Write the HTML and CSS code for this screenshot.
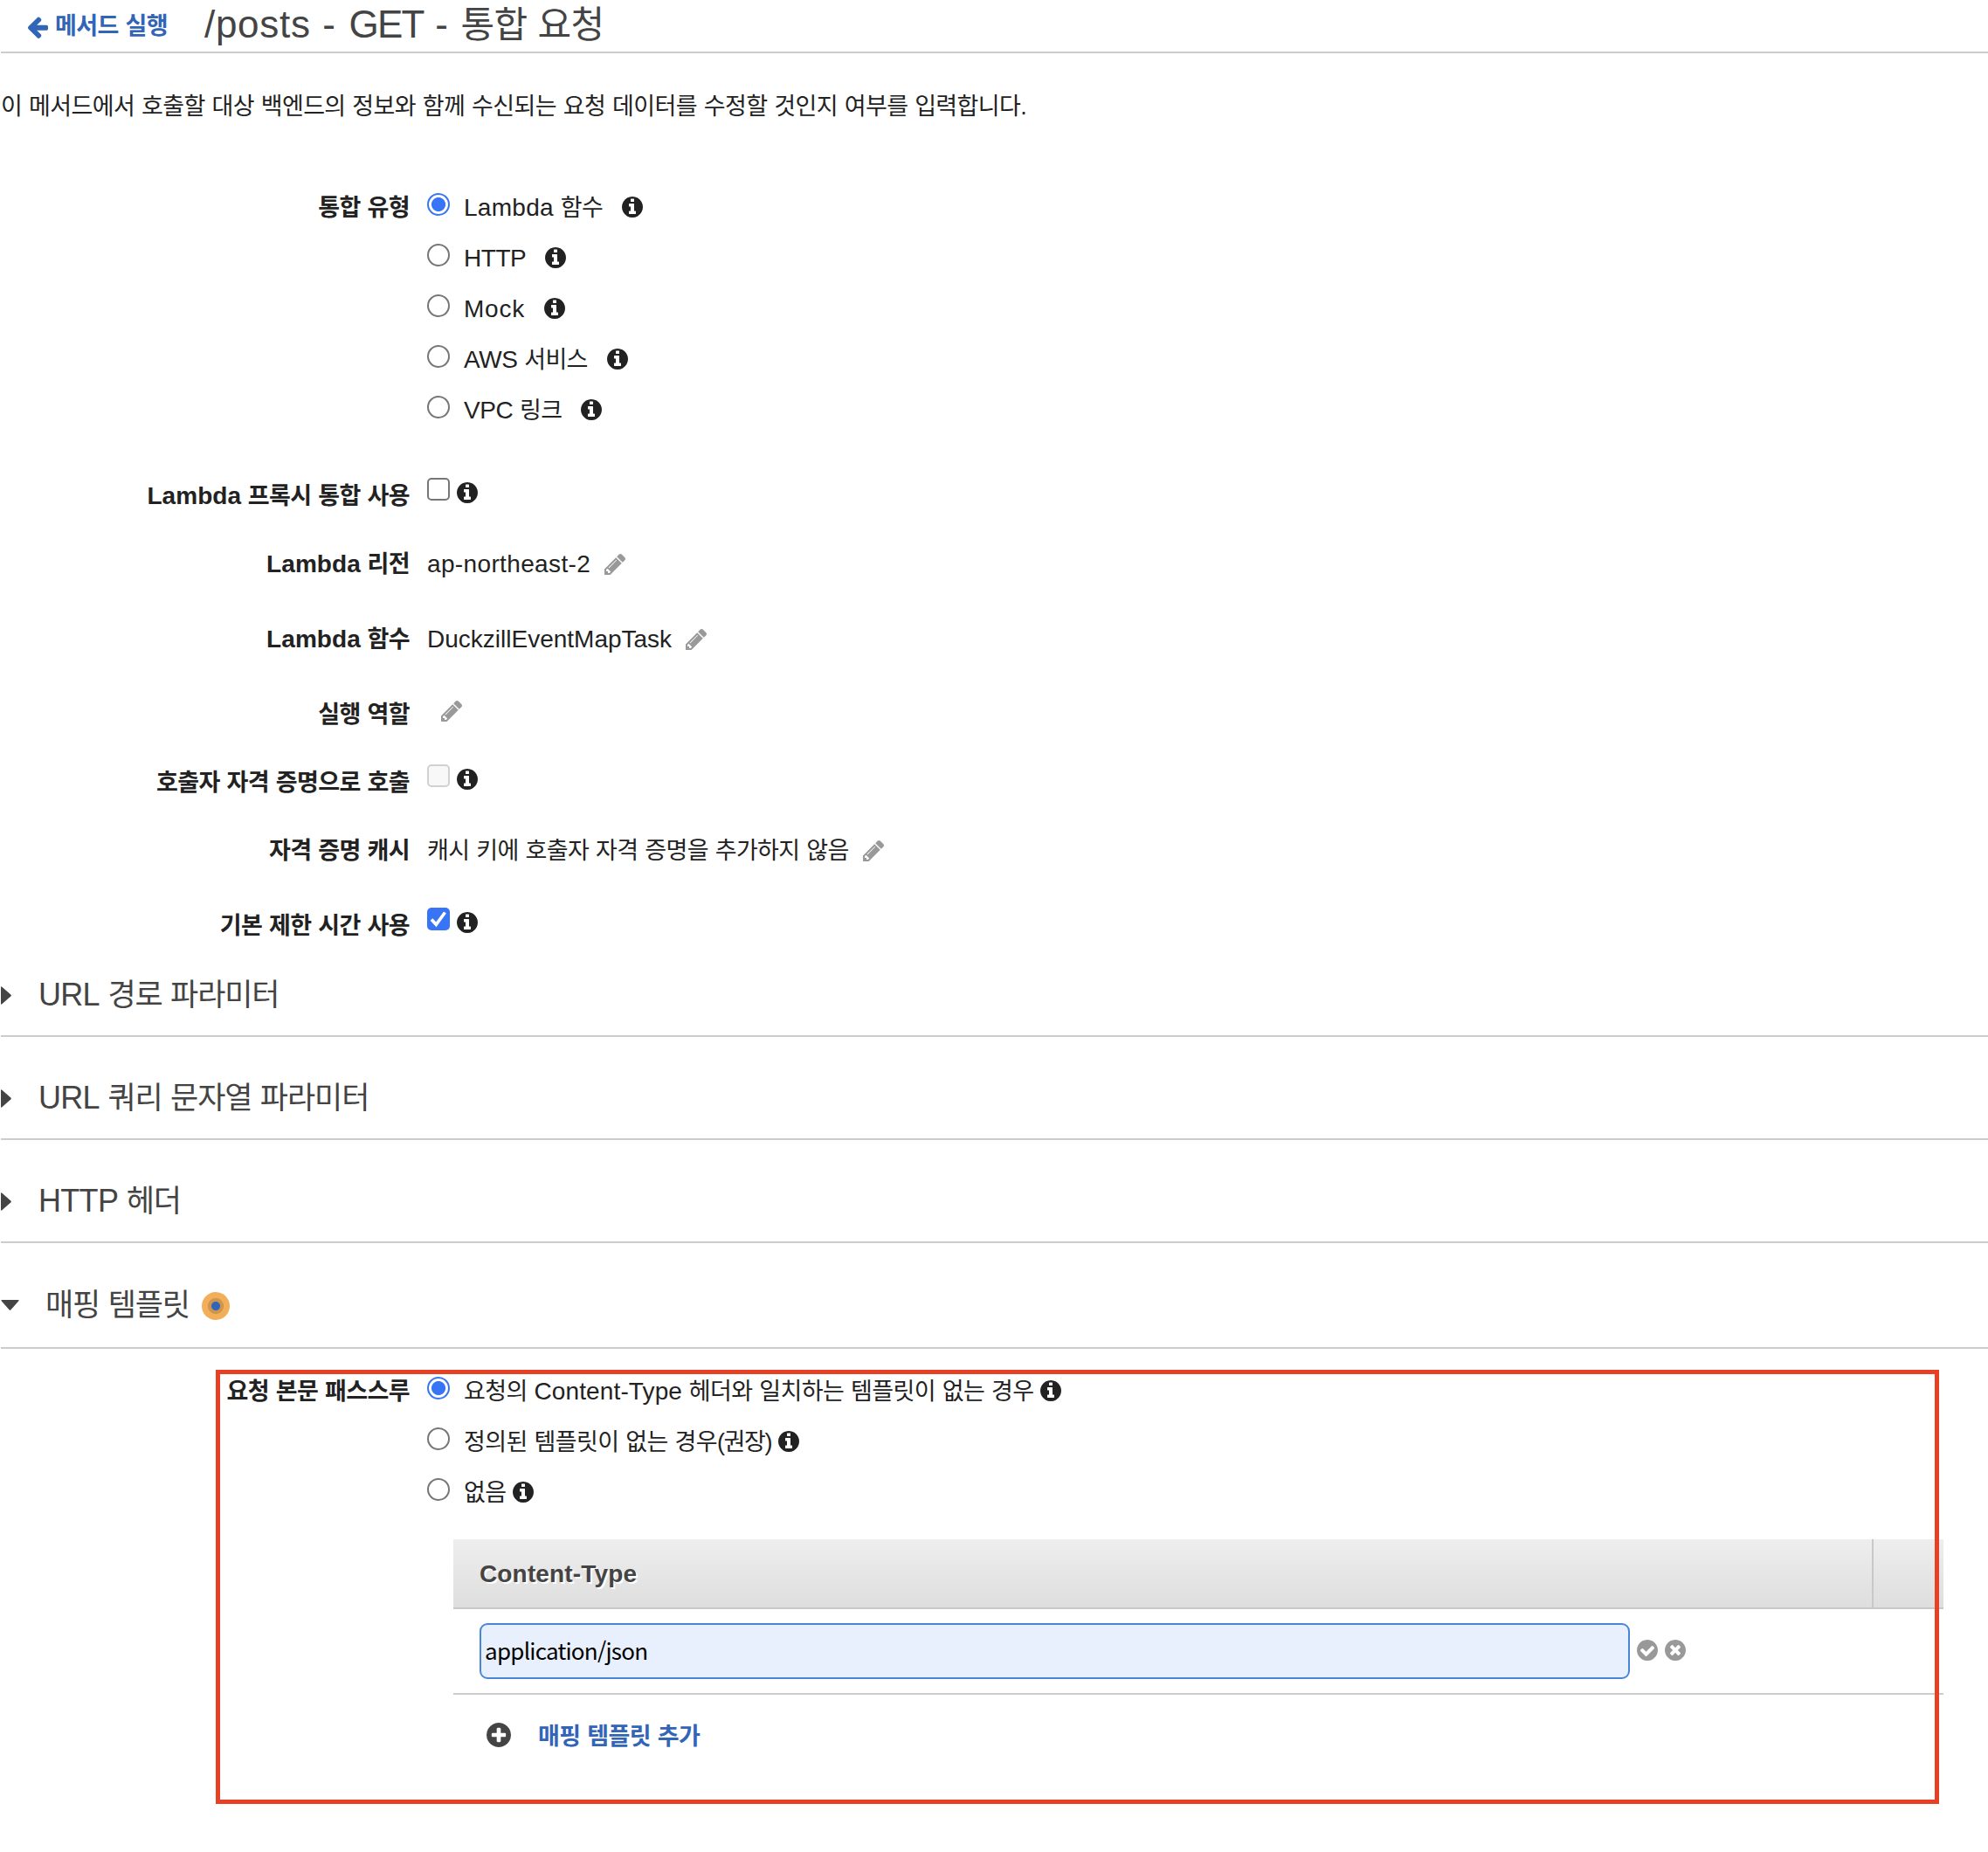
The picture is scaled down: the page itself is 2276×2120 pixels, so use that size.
FILE: index.html
```html
<!DOCTYPE html>
<html lang="ko">
<head>
<meta charset="utf-8">
<title>/posts - GET - 통합 요청</title>
<link rel="stylesheet" href="styles.css">
</head>
<body>
<svg class="sprite" width="0" height="0">
  <symbol id="info" viewBox="0 128 1536 1536"><path d="M1024 1376v-160q0-14-9-23t-23-9h-96v-512q0-14-9-23t-23-9h-320q-14 0-23 9t-9 23v160q0 14 9 23t23 9h96v320h-96q-14 0-23 9t-9 23v160q0 14 9 23t23 9h448q14 0 23-9t9-23zm-128-896v-160q0-14-9-23t-23-9h-192q-14 0-23 9t-9 23v160q0 14 9 23t23 9h192q14 0 23-9t9-23zm640 416q0 209-103 385.500t-279.500 279.500-385.500 103-385.500-103-279.500-279.500-103-385.500 103-385.500 279.500-279.500 385.500-103 385.500 103 279.500 279.500 103 385.500z"/></symbol>
  <symbol id="pencil" viewBox="128 149 1515 1515"><path d="M491 1536l91-91-235-235-91 91v107h128v128h107zm523-928q0-22-22-22-10 0-17 7l-542 542q-7 7-7 17 0 22 22 22 10 0 17-7l542-542q7-7 7-17zm-54-192l416 416-832 832h-416v-416zm683 96q0 53-37 90l-166 166-416-416 166-165q36-38 90-38 53 0 91 38l235 234q37 39 37 91z"/></symbol>
  <symbol id="check" viewBox="128 128 1536 1536"><path d="M1412 734q0-28-18-46l-91-90q-19-19-45-19t-45 19l-408 407-226-226q-19-19-45-19t-45 19l-91 90q-18 18-18 46 0 27 18 45l362 362q19 19 45 19 27 0 46-19l543-543q18-18 18-45zm252 162q0 209-103 385.500t-279.500 279.500-385.500 103-385.500-103-279.500-279.500-103-385.500 103-385.500 279.500-279.500 385.500-103 385.500 103 279.500 279.500 103 385.500z"/></symbol>
  <symbol id="times" viewBox="128 128 1536 1536"><path d="M1277 1122q0-26-19-45l-181-181 181-181q19-19 19-45 0-27-19-46l-90-90q-19-19-46-19-26 0-45 19l-181 181-181-181q-19-19-45-19-27 0-46 19l-90 90q-19 19-19 46 0 26 19 45l181 181-181 181q-19 19-19 45 0 27 19 46l90 90q19 19 46 19 26 0 45-19l181-181 181 181q19 19 45 19 27 0 46-19l90-90q19-19 19-46zm387-226q0 209-103 385.500t-279.500 279.500-385.500 103-385.500-103-279.500-279.500-103-385.500 103-385.500 279.500-279.500 385.500-103 385.500 103 279.500 279.500 103 385.500z"/></symbol>
  <symbol id="plus" viewBox="128 128 1536 1536"><path d="M1344 960v-128q0-26-19-45t-45-19h-256v-256q0-26-19-45t-45-19h-128q-26 0-45 19t-19 45v256h-256q-26 0-45 19t-19 45v128q0 26 19 45t45 19h256v256q0 26 19 45t45 19h128q26 0 45-19t19-45v-256h256q26 0 45-19t19-45zm320-64q0 209-103 385.500t-279.500 279.500-385.500 103-385.500-103-279.500-279.500-103-385.500 103-385.500 279.500-279.500 385.500-103 385.500 103 279.500 279.500 103 385.500z"/></symbol>
  <symbol id="back" viewBox="192 146 1472 1600"><path d="M1664 896v128q0 53-32.500 90.500t-84.500 37.500h-704l293 294q38 36 38 90t-38 90l-75 76q-37 37-90 37-52 0-91-37l-651-652q-37-37-37-90 0-52 37-91l651-650q38-38 91-38 52 0 90 38l75 74q38 38 38 91t-38 91l-293 293h704q52 0 84.500 37.500t32.500 90.500z"/></symbol>
</svg>

<header class="page-head">
  <a class="back"><svg class="back-icon"><use href="#back"/></svg>메서드 실행</a>
  <h1><span class="en">/posts - <span class="verb">GET</span> - </span>통합 요청</h1>
</header>
<p class="intro">이 메서드에서 호출할 대상 백엔드의 정보와 함께 수신되는 요청 데이터를 수정할 것인지 여부를 입력합니다.</p>

<form class="form">
  <div class="group">
    <div class="label tall">통합 유형</div>
    <div class="options wide">
      <label class="option"><input type="radio" name="type" checked><span><span class="en">Lambda</span> 함수</span><svg class="icon"><use href="#info"/></svg></label>
      <label class="option"><input type="radio" name="type"><span class="en caps">HTTP</span><svg class="icon"><use href="#info"/></svg></label>
      <label class="option"><input type="radio" name="type"><span class="en loose">Mock</span><svg class="icon"><use href="#info"/></svg></label>
      <label class="option"><input type="radio" name="type"><span><span class="en caps">AWS</span> 서비스</span><svg class="icon"><use href="#info"/></svg></label>
      <label class="option"><input type="radio" name="type"><span><span class="en caps">VPC</span> 링크</span><svg class="icon"><use href="#info"/></svg></label>
    </div>
  </div>
  <div class="row first">
    <div class="label"><span class="en">Lambda</span> 프록시 통합 사용</div>
    <div class="field toggle"><input type="checkbox"><svg class="icon"><use href="#info"/></svg></div>
  </div>
  <div class="row">
    <div class="label"><span class="en">Lambda</span> 리전</div>
    <div class="field"><span class="en region">ap-northeast-2</span><svg class="icon edit"><use href="#pencil"/></svg></div>
  </div>
  <div class="row spaced">
    <div class="label"><span class="en">Lambda</span> 함수</div>
    <div class="field"><span class="en function">DuckzillEventMapTask</span><svg class="icon edit"><use href="#pencil"/></svg></div>
  </div>
  <div class="row spaced">
    <div class="label">실행 역할</div>
    <div class="field toggle"><svg class="icon edit"><use href="#pencil"/></svg></div>
  </div>
  <div class="row">
    <div class="label">호출자 자격 증명으로 호출</div>
    <div class="field toggle"><input type="checkbox" disabled><svg class="icon"><use href="#info"/></svg></div>
  </div>
  <div class="row">
    <div class="label">자격 증명 캐시</div>
    <div class="field"><span>캐시 키에 호출자 자격 증명을 추가하지 않음</span><svg class="icon edit"><use href="#pencil"/></svg></div>
  </div>
  <div class="row spaced">
    <div class="label">기본 제한 시간 사용</div>
    <div class="field toggle"><input type="checkbox" checked><svg class="icon"><use href="#info"/></svg></div>
  </div>
</form>

<section class="section lead">
  <svg class="caret" viewBox="0 0 12 21"><path d="M0 1.500Q0 -.5 1.600 .9L11.300 9.500Q12.300 10.500 11.300 11.500L1.600 20.100Q0 21.500 0 19.500z"/></svg>
  <h2><span class="en">URL</span> 경로 파라미터</h2>
</section>
<section class="section">
  <svg class="caret" viewBox="0 0 12 21"><path d="M0 1.500Q0 -.5 1.600 .9L11.300 9.500Q12.300 10.500 11.300 11.500L1.600 20.100Q0 21.500 0 19.500z"/></svg>
  <h2><span class="en">URL</span> 쿼리 문자열 파라미터</h2>
</section>
<section class="section">
  <svg class="caret" viewBox="0 0 12 21"><path d="M0 1.500Q0 -.5 1.600 .9L11.300 9.500Q12.300 10.500 11.300 11.500L1.600 20.100Q0 21.500 0 19.500z"/></svg>
  <h2><span class="en">HTTP</span> 헤더</h2>
</section>
<section class="section open">
  <svg class="caret" viewBox="0 0 21 12"><path d="M1.500 0Q-.5 0 .9 1.600L9.500 11.300Q10.500 12.300 11.500 11.300L20.100 1.600Q21.500 0 19.500 0z"/></svg>
  <h2>매핑 템플릿</h2>
  <span class="beacon"></span>
</section>

<div class="mapping">
  <div class="group">
    <div class="label tall">요청 본문 패스스루</div>
    <div class="options">
      <label class="option"><input type="radio" name="pass" checked><span>요청의 <span class="en tight">Content-Type</span> 헤더와 일치하는 템플릿이 없는 경우</span><svg class="icon"><use href="#info"/></svg></label>
      <label class="option"><input type="radio" name="pass"><span>정의된 템플릿이 없는 경우<span class="paren">(권장)</span></span><svg class="icon"><use href="#info"/></svg></label>
      <label class="option"><input type="radio" name="pass"><span>없음</span><svg class="icon"><use href="#info"/></svg></label>
    </div>
  </div>
  <div class="table">
    <div class="thead"><div class="th en">Content-Type</div><div class="th-end"></div></div>
    <div class="tr">
      <input class="text" type="text" value="application/json">
      <svg class="icon"><use href="#check"/></svg>
      <svg class="icon"><use href="#times"/></svg>
    </div>
    <div class="add"><svg class="add-icon"><use href="#plus"/></svg><a>매핑 템플릿 추가</a></div>
  </div>
  <div class="highlight"></div>
</div>
</body>
</html>
```
FILE: styles.css
```css
* { box-sizing: border-box; }

body {
  margin: 0;
  padding-left: 1px;
  height: 2120px;
  overflow: hidden;
  background: #fff;
  color: #222;
  font-family: "Liberation Sans", "Noto Sans CJK KR", sans-serif;
  font-size: 27px;
  letter-spacing: -0.6px;
  word-spacing: 0.85px;
}

.sprite { position: absolute; }
.en { font-size: 28px; letter-spacing: 0.3px; }
.caps { letter-spacing: -0.45px; }
.loose { letter-spacing: 0.8px; }
.function { letter-spacing: 0; }
.region { letter-spacing: 0.36px; }
.tight { letter-spacing: 0.12px; }
.paren { letter-spacing: -1.4px; }

/* Page header */
.page-head {
  display: flex;
  height: 61px;
  border-bottom: 2px solid #ccc;
}
.back {
  display: flex;
  width: 202px;
  padding-left: 31px;
  color: #3264b8;
  font-weight: bold;
  line-height: 61px;
}
.back-icon { width: 23px; height: 25px; margin: 19px 8px 0 0; fill: currentColor; }
h1 {
  margin: 0;
  padding-left: 31px;
  color: #444;
  font-size: 42px;
  font-weight: normal;
  line-height: 56px;
  letter-spacing: -0.6px;
}
h1 .en { font-size: 44px; letter-spacing: 0.7px; }
h1 .verb { margin-left: 1px; letter-spacing: -1.8px; }
.intro { margin: 41px 0 0; line-height: 40px; }

/* Form */
.form { margin-top: 67px; }
.group, .row { display: flex; }
.row { height: 44px; margin-top: 34px; line-height: 44px; }
.row.spaced { margin-top: 42px; }
.row.first { margin-top: 47px; }
.label {
  width: 468px;
  margin-right: 20px;
  text-align: right;
  font-weight: bold;
  white-space: nowrap;
}
.label .en { letter-spacing: 0.05px; }
.label.tall { line-height: 58px; }
.field { display: flex; align-items: center; }
.icon { flex: none; width: 24px; height: 24px; fill: #222; }
.icon.edit { margin-left: 16px; fill: #999; }
.toggle .icon { margin: 0 0 9px 8px; }
.toggle .icon.edit { margin-left: 16px; }
.option {
  display: flex;
  align-items: center;
  height: 58px;
  line-height: 58px;
  white-space: nowrap;
}
.option .icon { margin: 0 0 2px 8px; }
.options.wide .icon { margin-left: 22px; }

input[type="radio"], input[type="checkbox"] {
  flex: none;
  appearance: none;
  width: 26px;
  height: 26px;
  margin: 0;
  border: 2px solid #767676;
  background: #fff;
}
input[type="radio"] { margin: 0 16px 8px 0; border-radius: 50%; }
input[type="radio"]:checked {
  border-color: #3875f6;
  background: radial-gradient(circle, #3875f6 7.600px, #fff 8.400px);
}
input[type="checkbox"] { margin-bottom: 16px; border-radius: 5px; }
input[type="checkbox"]:disabled { border-color: #d1d1d1; background: #f8f8f8; }
input[type="checkbox"]:checked {
  border: 0;
  background: #3875f6 url("data:image/svg+xml,%3Csvg xmlns='http://www.w3.org/2000/svg' viewBox='0 0 26 26'%3E%3Cpath d='M5 13.500L10.300 19.300L20.500 5.500' fill='none' stroke='white' stroke-width='3.600'/%3E%3C/svg%3E");
}

/* Collapsible sections */
.section {
  display: flex;
  align-items: center;
  padding: 45px 0 21px;
  border-bottom: 2px solid #ccc;
  color: #444;
}
.section.lead { padding-top: 32px; }
.section.open { padding: 46px 0 23px; }
.caret { width: 12px; height: 21px; margin-right: 31px; fill: #444; }
.open .caret { width: 21px; height: 12px; margin-right: 30px; }
h2 {
  margin: 0;
  font-size: 35px;
  font-weight: normal;
  line-height: 50px;
  letter-spacing: -1.1px;
}
h2 .en { font-size: 36px; letter-spacing: -0.7px; }
.beacon {
  width: 32px;
  height: 32px;
  margin: 2px 0 0 14px;
  border-radius: 50%;
  background: radial-gradient(circle, #3264b8 4.600px, #cd954d 5.400px, #cd954d 8.600px, #f2ae59 9.400px);
}

/* Mapping templates */
.mapping { position: relative; padding-top: 20px; }
.table { width: 1706px; margin: 24px 0 0 518px; }
.thead {
  display: flex;
  height: 80px;
  border-bottom: 2px solid #c8c8c8;
  background: linear-gradient(#eee, #dedede);
}
.th {
  flex: 1;
  padding-left: 30px;
  color: #444;
  font-weight: bold;
  line-height: 79px;
  letter-spacing: 0.15px;
  text-shadow: 2px 2px #fff;
}
.th-end { width: 82px; border-left: 2px solid #c8c8c8; }
.tr {
  display: flex;
  align-items: center;
  gap: 8px;
  height: 98px;
  padding-left: 30px;
  border-bottom: 2px solid #ccc;
}
.tr .icon { margin-bottom: 2px; fill: #999; }
.text {
  width: 1317px;
  height: 64px;
  padding: 0 0 4px 4px;
  border: 2px solid #4a86d8;
  border-radius: 9px;
  background: #e8effd;
  color: #000;
  font: 26px "Noto Sans CJK KR", sans-serif;
  letter-spacing: -0.75px;
}
.add { display: flex; align-items: center; height: 92px; padding-left: 38px; }
.add-icon { width: 28px; height: 28px; margin-right: 31px; fill: #444; }
.add a { padding-top: 3px; color: #3264b8; font-weight: bold; line-height: 44px; }
.highlight {
  position: absolute;
  left: 246px;
  top: 24px;
  width: 1973px;
  height: 497px;
  border: 5px solid #e84025;
}
```
